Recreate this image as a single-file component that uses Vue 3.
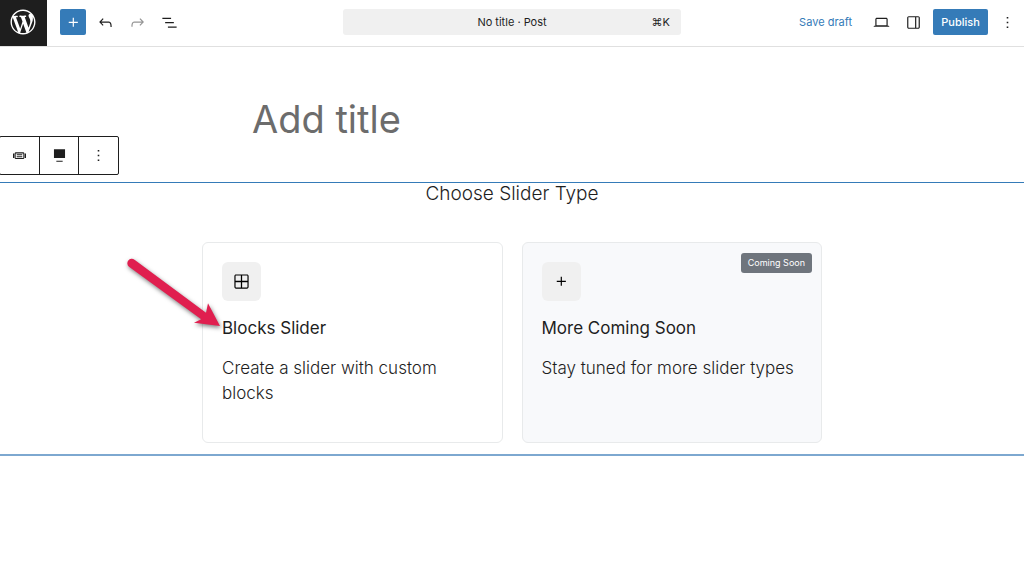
<script setup>
import { ref } from 'vue'

const title = ref('')

const icons = {
  plus: 'M11 12.5V17.5H12.5V12.5H17.5V11H12.5V6H11V11H6V12.5H11Z',
  undo: 'M18.3 11.7c-.6-.6-1.4-.9-2.3-.9H6.7l2.9-3.3-1.1-1-4.5 5L8.5 16l1-1-2.7-2.7H16c.5 0 .9.2 1.3.5 1 1 1 3.4 1 4.5v.3h1.5v-.2c0-1.5 0-4.3-1.5-5.7z',
  redo: 'M15.6 6.5l-1.1 1 2.9 3.3H8c-.9 0-1.7.3-2.3.9-1.4 1.5-1.4 4.2-1.4 5.6v.2h1.5v-.3c0-1.1 0-3.5 1-4.5.3-.3.7-.5 1.3-.5h9.2L14.5 15l1.1 1.1 4.6-4.6-4.6-5z',
  list: 'M3 6h11v1.5H3V6Zm3.5 5.5h11V13h-11v-1.5ZM21 17H10v1.5h11V17Z',
  desktop: 'M20.5 16h-.7V8c0-1.1-.9-2-2-2H6.2c-1.1 0-2 .9-2 2v8h-.7c-.8 0-1.5.7-1.5 1.5h20c0-.8-.7-1.5-1.5-1.5zM5.7 8c0-.3.2-.5.5-.5h11.6c.3 0 .5.2.5.5v7.6H5.7V8z',
  drawer: 'M18 4H6c-1.1 0-2 .9-2 2v12c0 1.1.9 2 2 2h12c1.1 0 2-.9 2-2V6c0-1.1-.9-2-2-2zm-4 14.5H6c-.3 0-.5-.2-.5-.5V6c0-.3.2-.5.5-.5h8v13zm4.5-.5c0 .3-.2.5-.5.5h-2.5v-13H18c.3 0 .5.2.5.5v12z',
  more: 'M13 19h-2v-2h2v2zm0-6h-2v-2h2v2zm0-6h-2V5h2v2z',
  full: 'M5 4h14v11H5V4Zm11 16H8v-1.5h8V20Z',
  grid: 'M19 3H5c-1.1 0-2 .9-2 2v14c0 1.1.9 2 2 2h14c1.1 0 2-.9 2-2V5c0-1.1-.9-2-2-2zm.5 2v6.2h-6.7V4.5H19c.3 0 .5.2.5.5zM5 4.5h6.2v6.7H4.5V5c0-.3.2-.5.5-.5zM4.5 19v-6.2h6.7v6.7H5c-.3 0-.5-.2-.5-.5zm14.5.5h-6.2v-6.7h6.7V19c0 .3-.2.5-.5.5z',
}
</script>

<template>
  <div class="editor">
    <header class="header">
      <div class="side">
        <a class="logo" href="#" aria-label="View Posts">
          <svg viewBox="-2 -2 24 24"><path d="M20 10c0-5.51-4.49-10-10-10C4.48 0 0 4.49 0 10c0 5.52 4.48 10 10 10 5.51 0 10-4.48 10-10zM7.78 15.37L4.37 6.22c.55-.02 1.17-.08 1.17-.08.5-.06.44-1.13-.06-1.11 0 0-1.45.11-2.37.11-.18 0-.37 0-.58-.01C4.12 2.69 6.87 1.11 10 1.11c2.33 0 4.45.87 6.05 2.34-.68-.11-1.65.39-1.65 1.58 0 .74.45 1.36.9 2.1.35.61.55 1.36.55 2.46 0 1.49-1.4 5-1.4 5l-3.03-8.37c.54-.02.82-.17.82-.17.5-.05.44-1.25-.06-1.22 0 0-1.44.12-2.38.12-.87 0-2.33-.12-2.33-.12-.5-.03-.56 1.2-.06 1.22l.92.08 1.26 3.41zM17.41 10c.24-.64.74-1.87.43-4.25.7 1.29 1.05 2.71 1.05 4.25 0 3.29-1.73 6.24-4.4 7.78.97-2.59 1.94-5.2 2.92-7.78zM6.1 18.09C3.12 16.65 1.11 13.53 1.11 10c0-1.3.23-2.48.72-3.59C3.25 10.3 4.67 14.2 6.1 18.09zm4.03-6.63l2.58 6.98c-.86.29-1.76.45-2.71.45-.79 0-1.57-.11-2.29-.33.81-2.38 1.62-4.74 2.42-7.1z" /></svg>
        </a>
        <div class="tools">
          <button class="tool primary" aria-label="Block Inserter"><svg class="icon" viewBox="0 0 24 24"><path :d="icons.plus" /></svg></button>
          <button class="tool" aria-label="Undo"><svg class="icon" viewBox="0 0 24 24"><path :d="icons.undo" /></svg></button>
          <button class="tool muted" aria-label="Redo"><svg class="icon" viewBox="0 0 24 24"><path :d="icons.redo" /></svg></button>
          <button class="tool" aria-label="Document Overview"><svg class="icon" viewBox="0 0 24 24"><path :d="icons.list" /></svg></button>
        </div>
      </div>
      <div class="tools">
        <button class="command"><span></span><span>No title · Post</span><span class="keys">⌘K</span></button>
      </div>
      <div class="tools settings">
        <button class="save">Save draft</button>
        <button class="tool" aria-label="View"><svg class="icon" viewBox="0 0 24 24"><path :d="icons.desktop" /></svg></button>
        <button class="tool" aria-label="Settings"><svg class="icon" viewBox="0 0 24 24"><path :d="icons.drawer" /></svg></button>
        <button class="publish primary">Publish</button>
        <button class="tool" aria-label="Options"><svg class="icon" viewBox="0 0 24 24"><path :d="icons.more" /></svg></button>
      </div>
    </header>

    <main>
      <input v-model="title" class="title" type="text" placeholder="Add title" aria-label="Add title">

      <section class="block">
        <div class="toolbar" role="toolbar" aria-label="Block tools">
          <button aria-label="Slider">
            <svg class="icon" viewBox="0 0 24 24">
              <rect x="6.5" y="8.7" width="11" height="7" rx="1" fill="none" stroke="currentColor" stroke-width="1.3" />
              <path d="M8.5 10.5h7v1.2h-7zM8.5 13h7v1.2h-7zM3.8 9.5h1.7v5.5H3.8zM18.5 9.5h1.7v5.5h-1.7z" />
            </svg>
          </button>
          <button aria-label="Align"><svg class="icon" viewBox="0 0 24 24"><path :d="icons.full" /></svg></button>
          <button aria-label="Options"><svg class="icon" viewBox="0 0 24 24"><path :d="icons.more" /></svg></button>
        </div>

        <h2>Choose Slider Type</h2>
        <div class="cards">
          <article class="card">
            <span class="tile"><svg class="icon" viewBox="0 0 24 24"><path :d="icons.grid" /></svg></span>
            <h3>Blocks Slider</h3>
            <p>Create a slider with custom blocks</p>
            <svg class="arrow" viewBox="0 0 100 80" aria-hidden="true">
              <path d="M11.5 2.8 83 55.8 85 46.3 97 69 71 65.7 78.2 62.2 6 9.7A4.3 4.3 0 0 1 11.5 2.8Z" />
            </svg>
          </article>
          <article class="card soon">
            <span class="tile"><svg class="icon" viewBox="0 0 24 24"><path :d="icons.plus" /></svg></span>
            <h3>More Coming Soon</h3>
            <p>Stay tuned for more slider types</p>
            <span class="badge">Coming Soon</span>
          </article>
        </div>
      </section>
    </main>
  </div>
</template>

<style>
body {
  margin: 0;
  background: #fff;
}
</style>

<style scoped>
* {
  box-sizing: border-box;
}
.editor {
  min-height: 100vh;
  font-family: Inter, "Liberation Sans", sans-serif;
  color: #1e1e1e;
}
button {
  padding: 0;
  border: 0;
  background: none;
  color: inherit;
  font: inherit;
  cursor: pointer;
}
.icon {
  display: block;
  width: 19px;
  height: 19px;
  fill: currentColor;
}
.header {
  display: grid;
  grid-template-columns: 1fr 33% 1fr;
  height: 47px;
  border-bottom: 1px solid #e0e0e0;
  font-size: 11px;
}
.side {
  display: flex;
  gap: 13px;
}
.logo {
  display: flex;
  align-items: center;
  justify-content: center;
  width: 47px;
  padding: 0 2px 2px 0;
  background: #1e1e1e;
}
.logo svg {
  width: 30px;
  height: 30px;
  fill: #fff;
}
.tools {
  display: flex;
  align-items: center;
  gap: 6px;
  padding-bottom: 2px;
}
.tool {
  display: grid;
  place-items: center;
  width: 26px;
  height: 26px;
  border-radius: 2px;
}
.muted {
  color: #949494;
}
.primary {
  background: #357bb8;
  color: #fff;
}
.command {
  display: grid;
  grid-template-columns: 1fr auto 1fr;
  align-items: center;
  width: 100%;
  height: 26px;
  padding: 0 11px;
  border-radius: 3px;
  background: #f0f0f0;
}
.keys {
  text-align: right;
}
.settings {
  justify-content: flex-end;
  padding-right: 4px;
}
.settings .tool + .tool {
  margin-right: 1px;
}
.save {
  padding: 0 10px;
  color: #357bb8;
}
.publish {
  height: 26px;
  width: 55px;
  border-radius: 2px;
  font-weight: 500;
}
.title {
  display: block;
  width: 100%;
  max-width: 520px;
  height: 52px;
  margin: 46px auto 37px;
  padding: 0;
  border: 0;
  outline: 0;
  background: none;
  font: 400 38px/52px Inter, "Liberation Sans", sans-serif;
  color: #1e1e1e;
}
.title::placeholder {
  color: #6c6c6c;
  opacity: 1;
}
.block {
  position: relative;
  padding-bottom: 11px;
  border-top: 1px solid #357bb8;
  border-bottom: 2px solid #7da8d0;
}
.toolbar {
  position: absolute;
  left: -1px;
  bottom: 100%;
  display: flex;
  margin-bottom: 8px;
  border: 1px solid #1e1e1e;
  border-radius: 2px;
  background: #fff;
}
.toolbar button {
  display: grid;
  place-items: center;
  width: 39px;
  height: 37px;
}
.toolbar button + button {
  border-left: 1px solid #1e1e1e;
}
.toolbar button:last-child {
  width: 40px;
}
h2,
h3,
p {
  margin: 0;
}
h2 {
  font-size: 19px;
  font-weight: 300;
  line-height: 22px;
  text-align: center;
}
.cards {
  display: grid;
  grid-template-columns: 1fr 1fr;
  gap: 19px;
  max-width: 620px;
  margin: 37px auto 0;
}
.card {
  position: relative;
  min-height: 201px;
  padding: 19px;
  border: 1px solid #e8eaeb;
  border-radius: 6px;
  background: #fff;
}
.soon {
  background: #f8f9fb;
}
.tile {
  display: grid;
  place-items: center;
  width: 39px;
  height: 39px;
  border-radius: 6px;
  background: #f0f0f0;
  color: #000;
}
h3 {
  margin-top: 15px;
  font-size: 17px;
  font-weight: 400;
  line-height: 25px;
}
p {
  margin-top: 15px;
  font-size: 17px;
  font-weight: 300;
  line-height: 25px;
}
.badge {
  position: absolute;
  top: 10px;
  right: 9px;
  padding: 0 7px;
  border-radius: 3px;
  background: #6f757d;
  color: #fff;
  font-size: 9px;
  line-height: 20px;
}
.arrow {
  position: absolute;
  top: 14px;
  left: -80px;
  width: 100px;
  height: 80px;
  fill: #e01f4f;
  filter: drop-shadow(1px 2px 2px rgba(0, 0, 0, 0.5));
}
</style>
